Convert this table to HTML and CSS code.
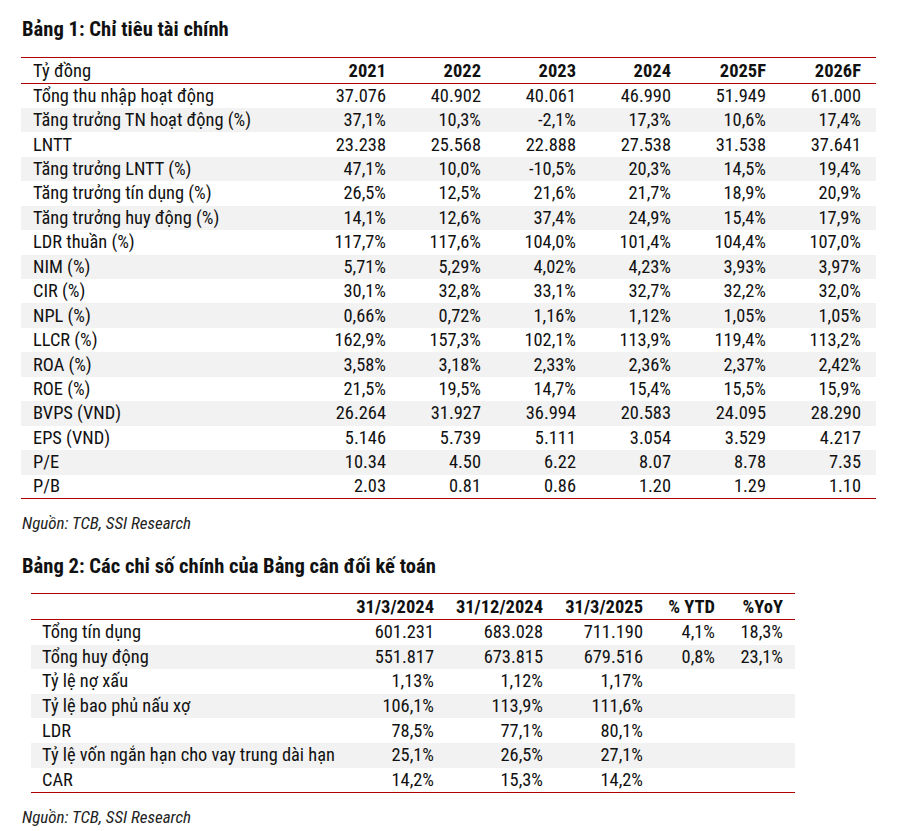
FILE: index.html
```html
<!DOCTYPE html>
<html lang="vi">
<head>
<meta charset="utf-8">
<title>Bảng chỉ tiêu tài chính</title>
<link rel="stylesheet" href="styles.css">
</head>
<body>
<div class="page">
  <h2 class="title t1">Bảng 1: Chỉ tiêu tài chính</h2>
  <table class="fin tbl1">
    <colgroup>
      <col class="c-label1"><col class="c-y"><col class="c-y"><col class="c-y"><col class="c-y"><col class="c-y"><col class="c-y"><col class="c-pad">
    </colgroup>
    <thead>
      <tr><th class="lbl">Tỷ đồng</th><th>2021</th><th>2022</th><th>2023</th><th>2024</th><th>2025F</th><th>2026F</th><th class="pad"></th></tr>
    </thead>
    <tbody>
      <tr><td class="lbl">Tổng thu nhập hoạt động</td><td>37.076</td><td>40.902</td><td>40.061</td><td>46.990</td><td>51.949</td><td>61.000</td><td></td></tr>
      <tr><td class="lbl">Tăng trưởng TN hoạt động (%)</td><td>37,1%</td><td>10,3%</td><td>-2,1%</td><td>17,3%</td><td>10,6%</td><td>17,4%</td><td></td></tr>
      <tr><td class="lbl">LNTT</td><td>23.238</td><td>25.568</td><td>22.888</td><td>27.538</td><td>31.538</td><td>37.641</td><td></td></tr>
      <tr><td class="lbl">Tăng trưởng LNTT (%)</td><td>47,1%</td><td>10,0%</td><td>-10,5%</td><td>20,3%</td><td>14,5%</td><td>19,4%</td><td></td></tr>
      <tr><td class="lbl">Tăng trưởng tín dụng (%)</td><td>26,5%</td><td>12,5%</td><td>21,6%</td><td>21,7%</td><td>18,9%</td><td>20,9%</td><td></td></tr>
      <tr><td class="lbl">Tăng trưởng huy động (%)</td><td>14,1%</td><td>12,6%</td><td>37,4%</td><td>24,9%</td><td>15,4%</td><td>17,9%</td><td></td></tr>
      <tr><td class="lbl">LDR thuần (%)</td><td>117,7%</td><td>117,6%</td><td>104,0%</td><td>101,4%</td><td>104,4%</td><td>107,0%</td><td></td></tr>
      <tr><td class="lbl">NIM (%)</td><td>5,71%</td><td>5,29%</td><td>4,02%</td><td>4,23%</td><td>3,93%</td><td>3,97%</td><td></td></tr>
      <tr><td class="lbl">CIR (%)</td><td>30,1%</td><td>32,8%</td><td>33,1%</td><td>32,7%</td><td>32,2%</td><td>32,0%</td><td></td></tr>
      <tr><td class="lbl">NPL (%)</td><td>0,66%</td><td>0,72%</td><td>1,16%</td><td>1,12%</td><td>1,05%</td><td>1,05%</td><td></td></tr>
      <tr><td class="lbl">LLCR (%)</td><td>162,9%</td><td>157,3%</td><td>102,1%</td><td>113,9%</td><td>119,4%</td><td>113,2%</td><td></td></tr>
      <tr><td class="lbl">ROA (%)</td><td>3,58%</td><td>3,18%</td><td>2,33%</td><td>2,36%</td><td>2,37%</td><td>2,42%</td><td></td></tr>
      <tr><td class="lbl">ROE (%)</td><td>21,5%</td><td>19,5%</td><td>14,7%</td><td>15,4%</td><td>15,5%</td><td>15,9%</td><td></td></tr>
      <tr><td class="lbl">BVPS (VND)</td><td>26.264</td><td>31.927</td><td>36.994</td><td>20.583</td><td>24.095</td><td>28.290</td><td></td></tr>
      <tr><td class="lbl">EPS (VND)</td><td>5.146</td><td>5.739</td><td>5.111</td><td>3.054</td><td>3.529</td><td>4.217</td><td></td></tr>
      <tr><td class="lbl">P/E</td><td>10.34</td><td>4.50</td><td>6.22</td><td>8.07</td><td>8.78</td><td>7.35</td><td></td></tr>
      <tr><td class="lbl">P/B</td><td>2.03</td><td>0.81</td><td>0.86</td><td>1.20</td><td>1.29</td><td>1.10</td><td></td></tr>
    </tbody>
  </table>
  <p class="source s1">Nguồn: TCB, SSI Research</p>

  <h2 class="title t2">Bảng 2: Các chỉ số chính của Bảng cân đối kế toán</h2>
  <table class="fin tbl2">
    <colgroup>
      <col class="c-label2"><col class="c-a"><col class="c-b"><col class="c-c"><col class="c-d"><col class="c-e"><col class="c-pad2">
    </colgroup>
    <thead>
      <tr><th class="lbl"></th><th>31/3/2024</th><th>31/12/2024</th><th>31/3/2025</th><th>% YTD</th><th>%YoY</th><th class="pad"></th></tr>
    </thead>
    <tbody>
      <tr><td class="lbl">Tổng tín dụng</td><td>601.231</td><td>683.028</td><td>711.190</td><td>4,1%</td><td>18,3%</td><td></td></tr>
      <tr><td class="lbl">Tổng huy động</td><td>551.817</td><td>673.815</td><td>679.516</td><td>0,8%</td><td>23,1%</td><td></td></tr>
      <tr><td class="lbl">Tỷ lệ nợ xấu</td><td>1,13%</td><td>1,12%</td><td>1,17%</td><td></td><td></td><td></td></tr>
      <tr><td class="lbl">Tỷ lệ bao phủ nấu xợ</td><td>106,1%</td><td>113,9%</td><td>111,6%</td><td></td><td></td><td></td></tr>
      <tr><td class="lbl">LDR</td><td>78,5%</td><td>77,1%</td><td>80,1%</td><td></td><td></td><td></td></tr>
      <tr><td class="lbl">Tỷ lệ vốn ngắn hạn cho vay trung dài hạn</td><td>25,1%</td><td>26,5%</td><td>27,1%</td><td></td><td></td><td></td></tr>
      <tr><td class="lbl">CAR</td><td>14,2%</td><td>15,3%</td><td>14,2%</td><td></td><td></td><td></td></tr>
    </tbody>
  </table>
  <p class="source s2">Nguồn: TCB, SSI Research</p>
</div>
</body>
</html>
```

FILE: styles.css
```css
* { box-sizing: border-box; }
html, body { margin: 0; padding: 0; background: #fff; }
body {
  font-family: "Roboto Condensed", "Liberation Sans", sans-serif;
  color: #111;
}
.page {
  width: 907px;
  padding: 17px 0 0 22px;
}
.title {
  margin: 0;
  font-size: 20.6px;
  font-weight: bold;
  line-height: 24px;
  color: #111;
}
.t1 { margin-bottom: 16px; }
.t2 { margin-bottom: 15px; }

.fin {
  border-collapse: collapse;
  table-layout: fixed;
  font-size: 18.4px;
  line-height: 20px;
}
.fin th, .fin td {
  padding: 0;
  text-align: right;
  white-space: nowrap;
  vertical-align: middle;
}
.fin thead th {
  font-weight: bold;
  font-size: 18.5px;
  border-top: 1px solid #b00000;
  border-bottom: 1px solid #b00000;
}
.fin tbody tr:last-child td { border-bottom: 1px solid #b00000; }
.fin tbody tr:nth-child(even) td { background: #f2f2f2; }
.fin .lbl { text-align: left; font-weight: normal; }

.tbl1 { width: 855px; margin-left: -1px; }
.tbl1 .c-label1 { width: 270px; }
.tbl1 .c-y { width: 95px; }
.tbl1 .c-pad { width: 15px; }
.tbl1 .lbl { padding-left: 12px; }
.tbl1 thead th { height: 26px; }
.tbl1 tbody td { height: 24.45px; }

.tbl2 { width: 764px; margin-left: 9px; }
.tbl2 .c-label2 { width: 290px; }
.tbl2 .c-a { width: 113px; }
.tbl2 .c-b { width: 109px; }
.tbl2 .c-c { width: 100px; }
.tbl2 .c-d { width: 72px; }
.tbl2 .c-e { width: 68px; }
.tbl2 .c-pad2 { width: 12px; }
.tbl2 .lbl { padding-left: 11px; }
.tbl2 thead th { height: 26px; }
.tbl2 tbody td { height: 24.6px; }

.source {
  margin: 0;
  font-style: italic;
  font-size: 17px;
  line-height: 20px;
  color: #222;
}
.s1 { margin-top: 14px; margin-bottom: 21px; }
.s2 { margin-top: 14px; }
```
